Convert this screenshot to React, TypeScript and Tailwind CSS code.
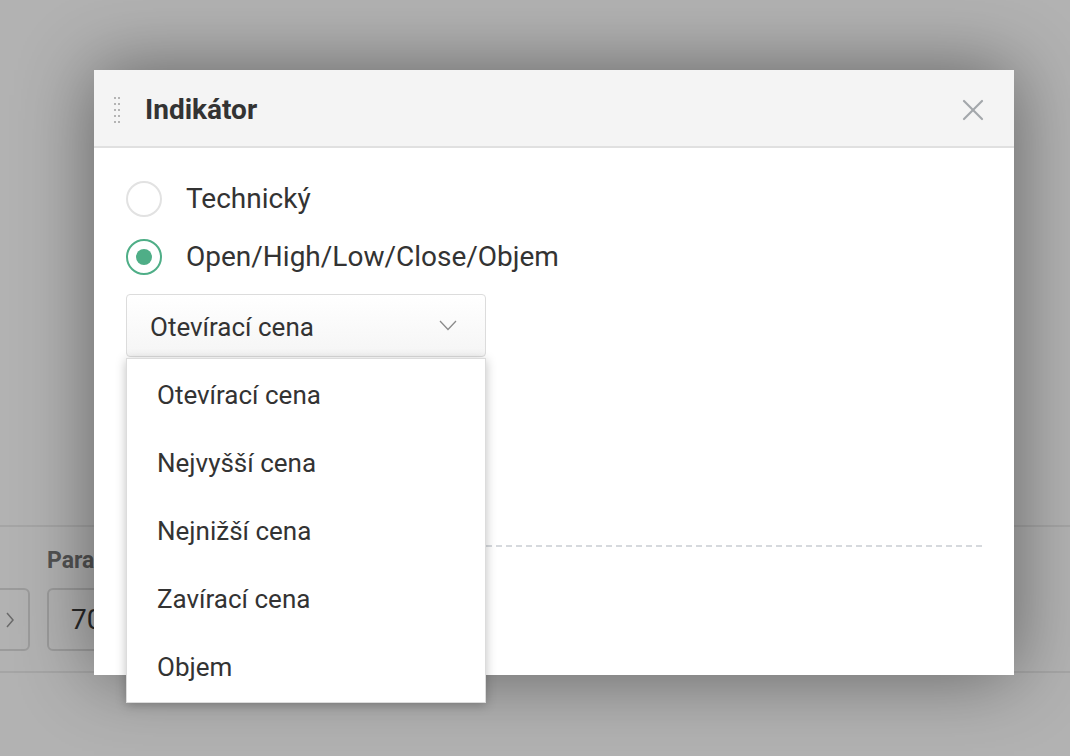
import React from "react";

const options = ["Otevírací cena", "Nejvyšší cena", "Nejnižší cena", "Zavírací cena", "Objem"];

function DragHandle() {
  return (
    <div className="grid grid-cols-2 gap-x-[2px] gap-y-[4px]">
      {Array.from({ length: 10 }).map((_, i) => (
        <span key={i} className="block w-[2px] h-[2px] bg-[#b4b4b4]" />
      ))}
    </div>
  );
}

function Radio({ checked, label }: { checked?: boolean; label: string }) {
  return (
    <label className="flex items-center gap-[24px] h-[36px]">
      <span
        className={
          "flex items-center justify-center w-[36px] h-[36px] rounded-full border-2 " +
          (checked ? "border-[#4fae87]" : "border-[#e2e2e2]")
        }
      >
        {checked && <span className="block w-[16px] h-[16px] rounded-full bg-[#4fae87]" />}
      </span>
      <span className="text-[28px] text-[#333]">{label}</span>
    </label>
  );
}

export default function App() {
  return (
    <div className="relative w-[1070px] h-[756px] overflow-hidden bg-white" style={{ fontFamily: "Roboto, 'Noto Sans', sans-serif" }}>
      {/* page behind the dialog */}
      <div className="pt-[525px]">
        <div className="border-y-2 border-[#ececec] h-[148px] pl-[47px] pt-[19px]">
          <div className="text-[23px] font-bold text-[#777] leading-[30px]">Parametry</div>
          <div className="flex gap-[17px] mt-[12px] -ml-[60px]">
            <div className="w-[43px] h-[63px] border-2 border-[#dedede] rounded-[6px] flex items-center justify-start pl-[16px]">
              <svg width="10" height="18" viewBox="0 0 10 18" fill="none" stroke="#999" strokeWidth="1.5">
                <polyline points="2,2 8,9 2,16" />
              </svg>
            </div>
            <div className="w-[200px] h-[63px] border-2 border-[#dedede] rounded-[6px] flex items-center pl-[22px] text-[28px] text-[#3c3c3c]">
              70
            </div>
          </div>
        </div>
      </div>
      <div className="absolute inset-0 bg-black/30" />

      {/* dialog */}
      <div className="absolute left-[94px] top-[70px] w-[920px] h-[605px] bg-white shadow-[0_0_70px_rgba(0,0,0,0.45)]">
        <div className="h-[78px] bg-[#f4f4f4] border-b-2 border-[#e0e0e0] flex items-center pl-[20px] pr-[30px] pt-[3px]">
          <DragHandle />
          <div className="ml-[25px] text-[28px] font-bold text-[#333] flex-1">Indikátor</div>
          <svg width="22" height="22" viewBox="0 0 22 22" fill="none" stroke="#a3a7ab" strokeWidth="2.2" strokeLinecap="round">
            <line x1="2" y1="2" x2="20" y2="20" />
            <line x1="20" y1="2" x2="2" y2="20" />
          </svg>
        </div>

        <div className="pl-[32px] pr-[32px] pt-[33px]">
          <div className="flex flex-col gap-[22px]">
            <Radio label="Technický" />
            <Radio checked label="Open/High/Low/Close/Objem" />
          </div>

          <div className="relative w-[360px] mt-[19px]">
            <div className="h-[63px] border border-[#dcdcdc] rounded-[4px] bg-gradient-to-b from-white to-[#f5f5f5] flex items-center pl-[23px] pr-[28px]">
              <span className="flex-1 text-[26px] text-[#333] pt-[4px]">Otevírací cena</span>
              <svg width="18" height="11" viewBox="0 0 18 11" fill="none" stroke="#8a8a8a" strokeWidth="1.3">
                <polyline points="1,1 9,9.5 17,1" />
              </svg>
            </div>
            <div className="absolute left-0 top-[64px] w-[360px] bg-white border border-[#dcdcdc] shadow-[0_2px_10px_rgba(0,0,0,0.25)] z-10 pt-[2px] pb-[1px]">
              {options.map((o) => (
                <div key={o} className="h-[68px] flex items-center pl-[30px] text-[26px] text-[#333]">
                  {o}
                </div>
              ))}
            </div>
          </div>

          <div className="mt-[188px] border-t-2 border-dashed border-[#d6d9dd]" />
        </div>
      </div>
    </div>
  );
}
